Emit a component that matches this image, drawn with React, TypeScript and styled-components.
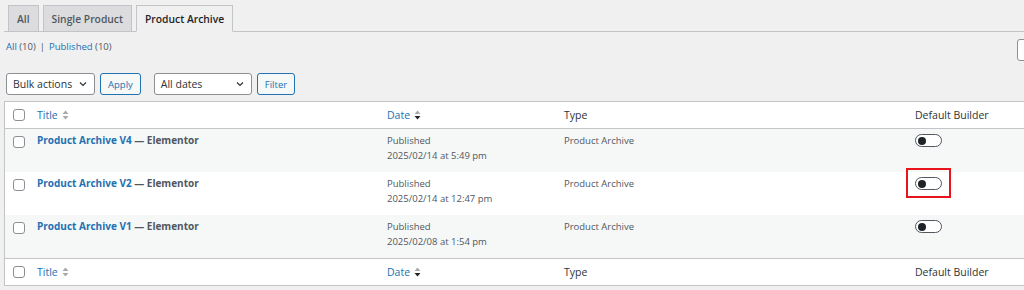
import React from 'react';
import styled, { createGlobalStyle } from 'styled-components';

const colors = {
    bg: '#f0f0f1',
    link: '#2271b1',
    text: '#3c434a',
    dark: '#2c3338',
    border: '#c3c4c7',
    stripe: '#f6f7f7',
    tab: '#dcdcde',
    muted: '#50575e',
};

const GlobalStyle = createGlobalStyle`
    html, body {
        margin: 0;
        padding: 0;
        background: ${colors.bg};
        overflow: hidden;
    }
    body {
        font-family: "Open Sans", "Noto Sans", sans-serif;
        color: ${colors.text};
    }
`;

const Page = styled.div`
    width: 1046px;
    padding: 5px 0 0 4px;
`;

const Tabs = styled.div`
    display: flex;
    align-items: flex-end;
    gap: 4px;
    padding-left: 4px;
    border-bottom: 1px solid ${colors.border};
    height: 26px;
`;

const Tab = styled.div<{ $active?: boolean }>`
    display: flex;
    align-items: center;
    height: 25px;
    padding: 0 8px;
    font-size: 10.3px;
    font-weight: 600;
    color: ${(p) => (p.$active ? '#1d2327' : colors.muted)};
    background: ${(p) => (p.$active ? colors.bg : colors.tab)};
    border: 1px solid ${colors.border};
    border-bottom: ${(p) => (p.$active ? `1px solid ${colors.bg}` : 'none')};
    margin-bottom: ${(p) => (p.$active ? '-1px' : '0')};
`;

const SubRow = styled.div`
    display: flex;
    justify-content: space-between;
    align-items: flex-start;
    margin-top: 8px;
    height: 33px;
`;

const SubSub = styled.div`
    font-size: 9.5px;
    color: ${colors.muted};
    padding-left: 2px;
    line-height: 14px;
    margin-top: 0;
`;

const SubLink = styled.a`
    color: ${colors.link};
    text-decoration: none;
`;

const Sep = styled.span`
    margin: 0 4px;
`;

const SearchBox = styled.div`
    width: 31px;
    height: 20px;
    margin-top: -1px;
    background: #fff;
    border: 1px solid #8c8f94;
    border-radius: 3px;
`;

const Actions = styled.div`
    display: flex;
    align-items: center;
    height: 22px;
    padding-left: 2px;
`;

const Select = styled.div<{ $w: number }>`
    display: flex;
    align-items: center;
    justify-content: space-between;
    box-sizing: border-box;
    width: ${(p) => p.$w}px;
    height: 22px;
    padding: 0 6px 0 6px;
    background: #fff;
    border: 1px solid #8c8f94;
    border-radius: 3px;
    font-size: 10.5px;
    color: ${colors.dark};
`;

const Button = styled.div<{ $gap: number }>`
    display: flex;
    align-items: center;
    box-sizing: border-box;
    height: 22px;
    padding: 0 7px;
    margin: 0 ${(p) => p.$gap}px 0 5px;
    background: ${colors.stripe};
    border: 1px solid ${colors.link};
    border-radius: 3px;
    font-size: 9.5px;
    color: ${colors.link};
`;

const Table = styled.div`
    margin-top: 6px;
    background: #fff;
    border: 1px solid ${colors.border};
    box-shadow: 0 1px 1px rgba(0, 0, 0, 0.04);
`;

const Row = styled.div<{ $striped?: boolean; $head?: 'top' | 'bottom' }>`
    display: grid;
    grid-template-columns: 32px 350px 177px 351px 1fr;
    align-items: ${(p) => (p.$head ? 'center' : 'start')};
    height: ${(p) => (p.$head ? 26 : 43)}px;
    background: ${(p) => (p.$striped ? colors.stripe : '#fff')};
    border-bottom: ${(p) => (p.$head === 'top' ? `1px solid ${colors.border}` : 'none')};
    border-top: ${(p) => (p.$head === 'bottom' ? `1px solid ${colors.border}` : 'none')};
`;

const Cell = styled.div<{ $pad?: number }>`
    padding-top: ${(p) => p.$pad ?? 0}px;
    font-size: 9.5px;
    line-height: 15px;
    color: ${colors.muted};
`;

const HeadCell = styled.div<{ $link?: boolean }>`
    display: flex;
    align-items: center;
    gap: 4px;
    font-size: 10.5px;
    color: ${(p) => (p.$link ? colors.link : colors.dark)};
`;

const Check = styled.span<{ $top?: number }>`
    display: block;
    width: 10px;
    height: 10px;
    margin-left: 8px;
    margin-top: ${(p) => p.$top ?? 0}px;
    border: 1px solid #8c8f94;
    border-radius: 3px;
    background: #fff;
`;

const TitleLine = styled.div`
    padding-top: 4px;
    font-size: 10px;
    font-weight: 700;
    color: ${colors.muted};
`;

const TitleLink = styled.a`
    color: ${colors.link};
    text-decoration: none;
`;

const ToggleWrap = styled.div<{ $marked?: boolean }>`
    display: inline-flex;
    margin-top: ${(p) => (p.$marked ? -4 : 5)}px;
    margin-left: ${(p) => (p.$marked ? -9 : 0)}px;
    padding: ${(p) => (p.$marked ? '7px 7px 6px' : '0')};
    border: ${(p) => (p.$marked ? '2px solid #e8141b' : 'none')};
`;

const Toggle = styled.span`
    position: relative;
    display: block;
    box-sizing: border-box;
    width: 27px;
    height: 13px;
    border: 1px solid #50575e;
    border-radius: 7px;
    background: #fff;

    &::after {
        content: '';
        position: absolute;
        left: 2px;
        top: 1.5px;
        width: 8px;
        height: 8px;
        border-radius: 50%;
        background: #1d2327;
    }
`;

const Chevron = () => (
    <svg width="10" height="10" viewBox="0 0 10 10">
        <path d="M2 3.5 L5 6.5 L8 3.5" fill="none" stroke="#2c3338" strokeWidth="1.2" />
    </svg>
);

const SortIcon = ({ active }: { active?: boolean }) => (
    <svg width="7" height="10" viewBox="0 0 7 10">
        <path d="M0.5 4 L3.5 0.5 L6.5 4 Z" fill="#a7aaad" />
        <path d="M0.5 6 L3.5 9.5 L6.5 6 Z" fill={active ? '#1d2327' : '#a7aaad'} />
    </svg>
);

const rows = [
    { name: 'Product Archive V4', date: '2025/02/14 at 5:49 pm', striped: true },
    { name: 'Product Archive V2', date: '2025/02/14 at 12:47 pm', marked: true },
    { name: 'Product Archive V1', date: '2025/02/08 at 1:54 pm', striped: true },
];

const HeaderRow = ({ pos }: { pos: 'top' | 'bottom' }) => (
    <Row $head={pos}>
        <Check />
        <HeadCell $link>
            Title <SortIcon />
        </HeadCell>
        <HeadCell $link>
            Date <SortIcon active />
        </HeadCell>
        <HeadCell>Type</HeadCell>
        <HeadCell>Default Builder</HeadCell>
    </Row>
);

const App = () => (
    <Page>
        <GlobalStyle />
        <Tabs>
            <Tab>All</Tab>
            <Tab>Single Product</Tab>
            <Tab $active>Product Archive</Tab>
        </Tabs>
        <SubRow>
            <SubSub>
                <SubLink>All</SubLink> (10)
                <Sep>|</Sep>
                <SubLink>Published</SubLink> (10)
            </SubSub>
            <SearchBox />
        </SubRow>
        <Actions>
            <Select $w={89}>
                Bulk actions <Chevron />
            </Select>
            <Button $gap={13}>Apply</Button>
            <Select $w={98}>
                All dates <Chevron />
            </Select>
            <Button $gap={0}>Filter</Button>
        </Actions>
        <Table>
            <HeaderRow pos="top" />
            {rows.map((r) => (
                <Row key={r.name} $striped={r.striped}>
                    <Check $top={7} />
                    <TitleLine>
                        <TitleLink>{r.name}</TitleLink> — Elementor
                    </TitleLine>
                    <Cell $pad={4}>
                        Published
                        <br />
                        {r.date}
                    </Cell>
                    <Cell $pad={4}>Product Archive</Cell>
                    <div>
                        <ToggleWrap $marked={r.marked}>
                            <Toggle />
                        </ToggleWrap>
                    </div>
                </Row>
            ))}
            <HeaderRow pos="bottom" />
        </Table>
    </Page>
);

export default App;
